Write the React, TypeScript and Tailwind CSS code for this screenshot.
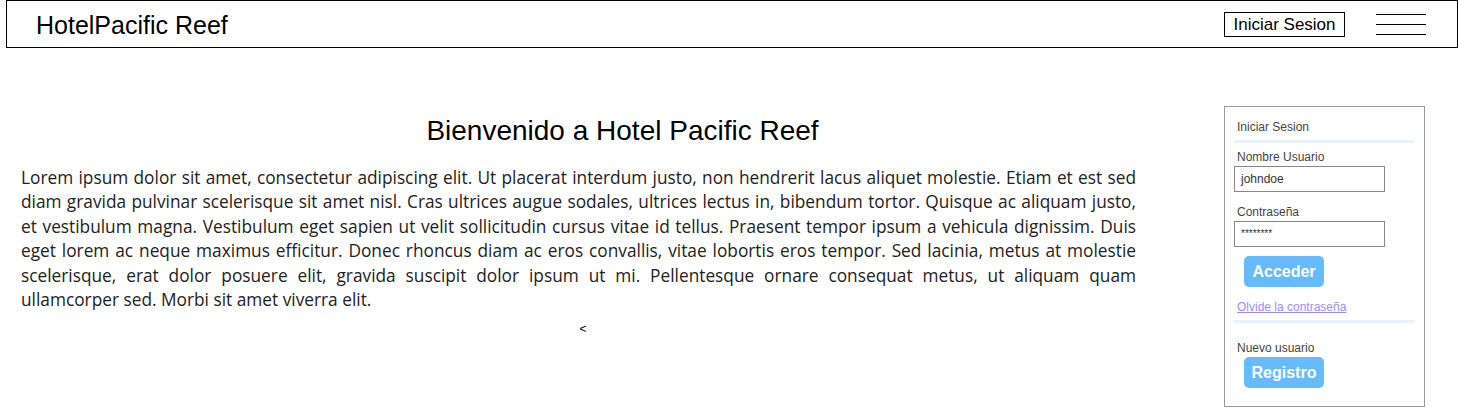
import React from 'react'

const lorem =
  'Lorem ipsum dolor sit amet, consectetur adipiscing elit. Ut placerat interdum justo, non hendrerit lacus aliquet molestie. Etiam et est sed diam gravida pulvinar scelerisque sit amet nisl. Cras ultrices augue sodales, ultrices lectus in, bibendum tortor. Quisque ac aliquam justo, et vestibulum magna. Vestibulum eget sapien ut velit sollicitudin cursus vitae id tellus. Praesent tempor ipsum a vehicula dignissim. Duis eget lorem ac neque maximus efficitur. Donec rhoncus diam ac eros convallis, vitae lobortis eros tempor. Sed lacinia, metus at molestie scelerisque, erat dolor posuere elit, gravida suscipit dolor ipsum ut mi. Pellentesque ornare consequat metus, ut aliquam quam ullamcorper sed. Morbi sit amet viverra elit.'

export default function App() {
  return (
    <div className="w-[1458px] h-[408px] bg-white overflow-hidden font-['Liberation_Sans',Arial,sans-serif] text-black">
      {/* barra superior */}
      <header className="ml-[6px] w-[1452px] h-[48px] border border-black flex items-center">
        <div className="ml-[29px] mt-[2px] text-[25px] leading-none">HotelPacific Reef</div>
        <div className="ml-auto flex items-center">
          <button className="w-[121px] h-[25px] border border-black text-[17px] leading-none flex items-center justify-center">
            Iniciar Sesion
          </button>
          <div className="ml-[31px] mr-[31px] w-[50px] flex flex-col gap-[9px]">
            <span className="block h-px bg-black" />
            <span className="block h-px bg-black" />
            <span className="block h-px bg-black" />
          </div>
        </div>
      </header>

      <div className="flex mt-[58px]">
        {/* contenido */}
        <div className="ml-[21px] w-[1203px]">
          <h1 className="text-center text-[28px] leading-[32px] mt-[9px]">Bienvenido a Hotel Pacific Reef</h1>
          <p className="mt-[19px] w-[1115px] text-justify text-[17.3px] leading-[24.4px] text-[#222] font-['Open_Sans',sans-serif]">
            {lorem}
          </p>
          <div className="w-[1124px] text-center text-[12px] leading-[14px] mt-[10px]">&lt;</div>
        </div>

        {/* panel login */}
        <aside className="w-[201px] h-[301px] border border-[#999] pl-[9px] text-[12px] leading-[14px] text-[#444]">
          <div className="ml-[3px] mt-[13px]">Iniciar Sesion</div>
          <div className="mt-[6px] w-[180px] h-[3px] bg-[#e8f2ff]" />
          <div className="ml-[3px] mt-[7px]">Nombre Usuario</div>
          <div className="mt-[2px] w-[151px] h-[26px] border border-[#888] flex items-center pl-[6px] text-[#333]">johndoe</div>
          <div className="ml-[3px] mt-[13px]">Contraseña</div>
          <div className="mt-[2px] w-[151px] h-[26px] border border-[#888] flex items-center pl-[6px] text-[10px] text-[#333]">********</div>
          <button className="ml-[10px] mt-[9px] w-[80px] h-[31px] rounded-[5px] bg-[#66bbff] text-white font-bold text-[16px] leading-none">
            Acceder
          </button>
          <div className="ml-[3px] mt-[13px] text-[#9a8cff] underline">Olvide la contraseña</div>
          <div className="mt-[6px] w-[180px] h-[3px] bg-[#e8f2ff]" />
          <div className="ml-[3px] mt-[18px]">Nuevo usuario</div>
          <button className="ml-[10px] mt-[2px] w-[80px] h-[31px] rounded-[5px] bg-[#66bbff] text-white font-bold text-[16px] leading-none">
            Registro
          </button>
        </aside>
      </div>
    </div>
  )
}
